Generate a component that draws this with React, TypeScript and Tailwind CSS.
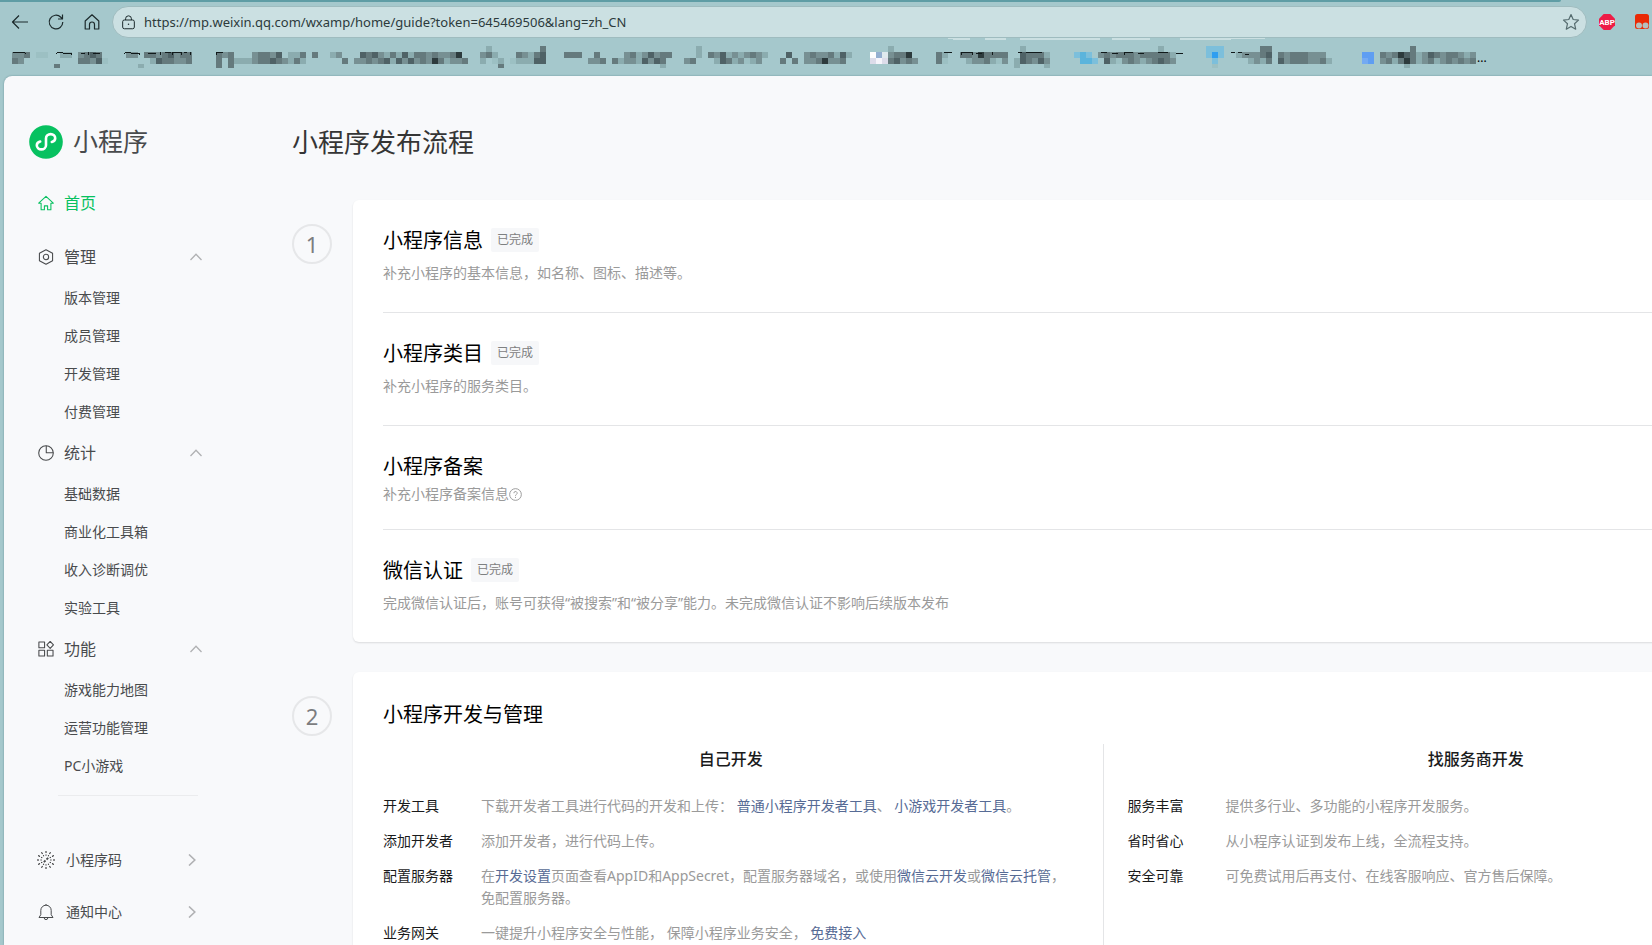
import type { ReactNode } from 'react'

const TONES: Record<string, string> = {
  '1': '#9cc0c3',
  '2': '#8bacaf',
  '3': '#779093',
  '4': '#657a7d',
  '5': '#4f6266',
  '6': '#2d3b3d',
  w: '#fdfdfe',
  b: '#94afd0',
  i: '#dfe9ee',
  l: '#dcdcea',
  p: '#f5f4fb',
  c: '#5bb4dc',
  d: '#7cbfdb',
  f: '#2f9ef0',
  e: '#5f9ef2',
  g: '#74aaf2',
}

// [first column, row 0, row 1, row 2, row 3], one character per 6px cell
const MOSAIC: [number, string, string, string, string][] = [
  [2, '', '334', '43', ''],
  [6, '', '11', '', ''],
  [9, '', ' 22', '', '4'],
  [13, '', '3454', '44351', ''],
  [21, '', '33', '', '  2'],
  [24, '', '44345344', ' 2544334', ''],
  [36, '', '434', '4 4', '4 4'],
  [39, '', '   34435 224 4', '222344543242', ''],
  [55, '', '23', '  4', ''],
  [59, '', ' 54532425244343346', '3343452535343642334', ''],
  [80, ' 2', '342', '2 12', '   4'],
  [85, '', ' 4324', '122255', ''],
  [90, '4', '5', '5', ''],
  [94, '', '444', '', ''],
  [98, '', ' 4', '334', ''],
  [102, '', '  34235344', '423325354', '        2'],
  [114, '  2', '  2', '34', ''],
  [118, '', '4352323432', ' 25423123', ''],
  [130, '', ' 5', '4 4', ''],
  [134, '', '34334252', '3346334', ''],
  [145, '   2', 'wbi3446', 'lpl45343', ''],
  [156, '', '42', '41', ''],
  [160, '', '44364444', ' 2334213', ''],
  [169, ' 2', ' 54442', '254353', '2    2'],
  [179, '', 'dcd', ' ccd', ''],
  [183, '          2', '3434443444442', ' 521343234543', ''],
  [201, 'ddd', 'dfd', ' d', ' 1'],
  [206, '    44', '233345 43444333', '  2324 534443342', ''],
  [227, '', 'ee', 'ge', ''],
  [230, '     4', '4346542354344323', '3424642342343434', '    2'],
]

const ROW_Y = [8, 14, 20, 26]

function BookmarkStrip() {
  const rects: ReactNode[] = []
  MOSAIC.forEach(([col, ...rows]) => {
    rows.forEach((row, r) => {
      row.split('').forEach((ch, i) => {
        if (ch === ' ') return
        rects.push(
          <rect
            key={`${col}-${r}-${i}`}
            x={(col + i) * 6}
            y={ROW_Y[r]}
            width="6"
            height={r === 3 ? 4 : 6}
            fill={TONES[ch]}
          />,
        )
      })
    })
  })

  return (
    <svg width="1477" height="38" viewBox="0 0 1477 38" className="shrink-0" shapeRendering="crispEdges" aria-hidden="true">
      <path d="M948 0H1265V1H1231V2H1180V0H1150V2H1112V0H1100V2H1020V0H1006V2H985V0H970V2H953V1H948Z" fill="#cbe0e2" />
      {rects}
      <path
        d="M13 15l2-1h9l2 2M56 16l2-2h4l1 1h8v2M81 15h4M88 14v3M93 15h7M124 16l2-2h4l1 1h8v2M148 15h8M160 14v3M165 14h6M172 17v-3h9v3M184 14h3M190 14v3M216 17v-2l2-1h3l2 1M944 14h8M961 17v-3h11v3M976 15h6M992 14v3M1018 14h4M1026 14h16M1101 14h6M1112 15h6M1124 17v-3h9M1138 15h6M1158 14h10M1176 15h7M1231 14h4M1238 14h4M1245 16h4"
        fill="none"
        stroke="#10191a"
      />
    </svg>
  )
}

function StrokeIcon({ size, className, children }: { size: number; className?: string; children: ReactNode }) {
  return (
    <svg
      width={size}
      height={size}
      viewBox="0 0 18 18"
      fill="none"
      stroke="currentColor"
      strokeWidth="1.2"
      strokeLinejoin="round"
      className={`shrink-0 ${className ?? ''}`}
      aria-hidden="true"
    >
      {children}
    </svg>
  )
}

function Toolbar() {
  return (
    <div className="flex h-8 items-center pl-2.5 text-[#1c2a2c]">
      <button className="mr-4 flex h-5 w-5 items-center justify-center" aria-label="后退">
        <StrokeIcon size={18}>
          <path d="M17 9H1.500M8 2.500L1.500 9 8 15.500" />
        </StrokeIcon>
      </button>
      <button className="mr-4 flex h-5 w-5 items-center justify-center" aria-label="刷新">
        <StrokeIcon size={18}>
          <path d="M15.800 9a6.800 6.800 0 1 1-2-4.800L15.500 6M15.500 1.500V6H11" />
        </StrokeIcon>
      </button>
      <button className="mr-2.5 flex h-5 w-5 items-center justify-center" aria-label="主页">
        <StrokeIcon size={18}>
          <path d="M2.200 8L9 1.800 15.800 8v8H11.500v-4.500a2.500 2.500 0 0 0-5 0V16H2.200z" />
        </StrokeIcon>
      </button>
      <div className="flex h-8 min-w-0 flex-1 items-center rounded-full border border-[#9fbcbf] bg-[#cbe0e2] pr-1.5 pl-2">
        <StrokeIcon size={15} className="mr-2">
          <rect x="2" y="6" width="14" height="10.500" rx="2" />
          <path d="M5.500 6V4.500a3.500 3.500 0 0 1 7 0V6" />
          <circle cx="9" cy="11.200" r="0.900" fill="currentColor" stroke="none" />
        </StrokeIcon>
        <input
          aria-label="地址栏"
          readOnly
          value="https://mp.weixin.qq.com/wxamp/home/guide?token=645469506&lang=zh_CN"
          className="min-w-0 flex-1 bg-transparent pt-0.5 font-['Noto_Sans'] text-[13px] text-[#2c3a3c] outline-none"
        />
        <button aria-label="收藏">
          <StrokeIcon size={18} className="text-[#566c6f]">
            <path d="M9 1.500l2.200 5 5.300.6-4 3.600 1.200 5.500L9 13.400l-4.700 2.800 1.200-5.500-4-3.600 5.300-.6z" />
          </StrokeIcon>
        </button>
      </div>
      <button className="ml-3 shrink-0" aria-label="ABP">
        <svg width="16" height="18" viewBox="0 0 16 18">
          <path d="M4.700 1h6.600L16 5.700v6.600L11.300 17H4.700L0 12.300V5.700z" fill="#ee1c46" />
          <text x="8" y="12" textAnchor="middle" fontSize="8" fontWeight="700" fill="#fff" fontFamily="Roboto, sans-serif">
            ABP
          </text>
        </svg>
      </button>
      <button className="mr-0.5 ml-5 shrink-0" aria-label="扩展">
        <svg width="15" height="16" viewBox="0 0 15 16">
          <rect y="0" width="14" height="15" rx="2.500" fill="#ea2a05" />
          <circle cx="4" cy="11.500" r="3" fill="#b5c0bd" />
          <circle cx="10.500" cy="11.500" r="3" fill="#b5c0bd" />
        </svg>
      </button>
    </div>
  )
}

const GROUPS = [
  {
    title: '管理',
    icon: (
      <>
        <path d="M9 .8l7.400 4v8.400l-7.400 4-7.400-4V4.800z" />
        <circle cx="9" cy="9" r="3" />
      </>
    ),
    items: ['版本管理', '成员管理', '开发管理', '付费管理'],
  },
  {
    title: '统计',
    icon: (
      <>
        <circle cx="9" cy="9" r="8.200" />
        <path d="M9.300.8V8.800h7.900" />
      </>
    ),
    items: ['基础数据', '商业化工具箱', '收入诊断调优', '实验工具'],
  },
  {
    title: '功能',
    icon: (
      <>
        <rect x="1" y="1.200" width="6.400" height="6.400" />
        <path d="M13.700.5l3.700 3.900-3.700 3.900L10 4.400z" />
        <rect x="1" y="10.500" width="6.400" height="6.400" />
        <rect x="10.500" y="10.500" width="6.400" height="6.400" />
      </>
    ),
    items: ['游戏能力地图', '运营功能管理', 'PC小游戏'],
  },
]

const RAYS = [0, 30, 60, 90, 120, 150, 180, 210, 240, 270, 300, 330]

const SHORTCUTS = [
  {
    title: '小程序码',
    icon: (
      <>
        {RAYS.map((a) => (
          <path key={a} d="M9 0v2M9 3.500v1.200" transform={`rotate(${a} 9 9)`} stroke="#222324" strokeWidth="1" />
        ))}
        <path d="M6.800 11.200l1.700-1.700M9.500 8.500l1.700-1.700" strokeWidth="1.800" />
      </>
    ),
  },
  {
    title: '通知中心',
    icon: <path d="M9 1v1.200M2 14.500h14l-1.800-2.800V7.400a5.200 5.200 0 0 0-10.400 0v4.300zM7.200 14.800a1.800 1.800 0 0 0 3.600 0" strokeWidth="1" />,
  },
]

function Sidebar() {
  return (
    <aside className="w-[288px] shrink-0 pt-[46px] text-[#494b4d]">
      <div className="flex h-10 items-center pl-[25px]">
        <svg width="34" height="34" viewBox="0 0 34 34" aria-hidden="true">
          <circle cx="17" cy="17" r="16.800" fill="#07c160" />
          <path
            d="M11.200 16.600c-2 .5-3.400 1.800-3.400 3.700 0 2.300 2 4.100 4.500 4.100s4.700-1.800 4.700-4.200v-6.900c0-2.400 2.200-4.200 4.700-4.200s4.500 1.800 4.500 4.100c0 1.900-1.400 3.200-3.400 3.700"
            fill="none"
            stroke="#fff"
            strokeWidth="2.600"
            strokeLinecap="round"
          />
        </svg>
        <span className="ml-2.5 text-[25px]">小程序</span>
      </div>
      <nav className="pl-[34px]">
        <a href="#home" className="mt-[25px] flex h-8 items-center text-base text-[#07c160]">
          <StrokeIcon size={16} className="mr-2.5">
            <path d="M9 1.500L.8 9.200h2.700v7.300h3.700v-4.300h3.600v4.300h3.700V9.200h2.700z" />
          </StrokeIcon>
          首页
        </a>
        <div className="mt-4">
          {GROUPS.map((group) => (
            <div key={group.title}>
              <button className="flex h-11 w-[164px] items-center text-base">
                <StrokeIcon size={16} className="mr-2.5">
                  {group.icon}
                </StrokeIcon>
                {group.title}
                <svg width="12" height="8" viewBox="0 0 12 8" fill="none" stroke="#b0b1b3" strokeWidth="1.300" className="ml-auto">
                  <path d="M.5 7L6 1.200 11.500 7" />
                </svg>
              </button>
              <ul className="pl-[26px] text-sm">
                {group.items.map((item) => (
                  <li key={item}>
                    <a href="#menu" className="flex h-[38px] items-center">
                      {item}
                    </a>
                  </li>
                ))}
              </ul>
            </div>
          ))}
        </div>
        <hr className="mt-2.5 ml-5 w-[140px] border-[#ebecee]" />
        <div className="mt-[38px]">
          {SHORTCUTS.map((s) => (
            <button key={s.title} className="flex h-[52px] w-[158px] items-center text-sm">
              <StrokeIcon size={18} className="mr-[11px] -ml-px">
                {s.icon}
              </StrokeIcon>
              {s.title}
              <svg width="8" height="12" viewBox="0 0 8 12" fill="none" stroke="#b0b1b3" strokeWidth="1.600" className="ml-auto">
                <path d="M1 .5L6.800 6 1 11.500" />
              </svg>
            </button>
          ))}
        </div>
      </nav>
    </aside>
  )
}

function StepNumber({ children }: { children: ReactNode }) {
  return (
    <div className="mt-6 flex h-10 w-10 shrink-0 items-center justify-center rounded-full border-2 border-[#e6e7e9] text-[22px] text-[#7c7d7f]">
      {children}
    </div>
  )
}

function InfoItem({ title, done, children }: { title: string; done?: boolean; children: ReactNode }) {
  return (
    <section className={`border-b border-[#e4e5e7] pt-7 last:border-b-0 ${done ? 'pb-7' : 'pb-6'}`}>
      <div className="flex h-6 items-start gap-2">
        <h2 className="text-xl leading-[26px] text-black">{title}</h2>
        {done && <span className="rounded-xs bg-[#f6f7f9] px-1.5 text-xs leading-6 text-[#7e8081]">已完成</span>}
      </div>
      <p className={`flex items-center text-sm leading-[22px] text-[#9a9a9a] ${done ? 'mt-2.5' : 'mt-[5px]'}`}>
        {children}
      </p>
    </section>
  )
}

function Row({ label, children }: { label: string; children: ReactNode }) {
  return (
    <div className="flex text-sm leading-[22px]">
      <dt className="w-[98px] shrink-0 text-[#1a1b1c]">{label}</dt>
      <dd className="text-[#9a9a9a]">{children}</dd>
    </div>
  )
}

function Link({ children }: { children: ReactNode }) {
  return (
    <a href="#link" className="text-[#576b95]">
      {children}
    </a>
  )
}

const SERVICES = [
  ['服务丰富', '提供多行业、多功能的小程序开发服务。'],
  ['省时省心', '从小程序认证到发布上线，全流程支持。'],
  ['安全可靠', '可免费试用后再支付、在线客服响应、官方售后保障。'],
]

export default function App() {
  return (
    <div className="flex h-screen flex-col overflow-hidden bg-[#a5c8cc] font-['Noto_Sans','Noto_Sans_CJK_SC',sans-serif]">
      <div className="mr-[91px] h-0.5 shrink-0 rounded-br bg-[#5f9da5]" />
      <div className="shrink-0 pt-1">
        <Toolbar />
        <div className="flex h-[38px]">
          <BookmarkStrip />
          <span className="mt-2 text-xs leading-6 text-black">...</span>
        </div>
      </div>

      <div className="ml-1 flex min-h-0 flex-1 rounded-tl-lg bg-[#f8f9fb] shadow-[0_0_2px_rgba(0,60,70,0.4)]">
        <Sidebar />
        <main className="flex min-w-[1562px] flex-1 flex-col">
          <h1 className="mt-12 text-[26px] leading-9 text-[#353535]">小程序发布流程</h1>

          <div className="mt-10 flex shrink-0 gap-[21px]">
            <StepNumber>1</StepNumber>
            <div className="flex-1 rounded-md bg-white px-[30px] shadow-[0_1px_2px_rgba(0,0,0,0.12)]">
              <InfoItem title="小程序信息" done>
                补充小程序的基本信息，如名称、图标、描述等。
              </InfoItem>
              <InfoItem title="小程序类目" done>
                补充小程序的服务类目。
              </InfoItem>
              <InfoItem title="小程序备案">
                补充小程序备案信息
                <svg width="13" height="13" viewBox="0 0 12 12" fill="none" stroke="#9a9a9a" strokeWidth="0.900" aria-hidden="true">
                  <circle cx="6" cy="6" r="5.400" />
                  <path d="M4.500 4.800a1.500 1.500 0 1 1 2.300 1.200c-.6.400-.8.600-.8 1.200M6 8.200v1" />
                </svg>
              </InfoItem>
              <InfoItem title="微信认证" done>
                完成微信认证后，账号可获得“被搜索”和“被分享”能力。未完成微信认证不影响后续版本发布
              </InfoItem>
            </div>
          </div>

          <div className="mt-[30px] flex flex-1 gap-[21px]">
            <StepNumber>2</StepNumber>
            <div className="flex flex-1 flex-col rounded-t-md bg-white px-[30px] pt-7 shadow-[0_1px_2px_rgba(0,0,0,0.12)]">
              <h2 className="text-xl leading-[30px] text-black">小程序开发与管理</h2>
              <div className="mt-3.5 grid flex-1 grid-cols-2">
                <div className="border-r border-[#e4e5e7] pr-6">
                  <h3 className="text-center text-base leading-[30px] font-medium text-[#1a1b1c]">自己开发</h3>
                  <dl className="mt-[21px] flex flex-col gap-[13px]">
                    <Row label="开发工具">
                      下载开发者工具进行代码的开发和上传： <Link>普通小程序开发者工具</Link>、 <Link>小游戏开发者工具</Link>。
                    </Row>
                    <Row label="添加开发者">添加开发者，进行代码上传。</Row>
                    <Row label="配置服务器">
                      在<Link>开发设置</Link>页面查看AppID和AppSecret，配置服务器域名，或使用<Link>微信云开发</Link>或
                      <Link>微信云托管</Link>，
                      <br />
                      免配置服务器。
                    </Row>
                    <Row label="业务网关">
                      一键提升小程序安全与性能， 保障小程序业务安全， <Link>免费接入</Link>
                    </Row>
                  </dl>
                </div>
                <div className="pl-6">
                  <h3 className="text-center text-base leading-[30px] font-medium text-[#1a1b1c]">找服务商开发</h3>
                  <dl className="mt-[21px] flex flex-col gap-[13px]">
                    {SERVICES.map(([label, text]) => (
                      <Row key={label} label={label}>
                        {text}
                      </Row>
                    ))}
                  </dl>
                </div>
              </div>
            </div>
          </div>
        </main>
      </div>
    </div>
  )
}
